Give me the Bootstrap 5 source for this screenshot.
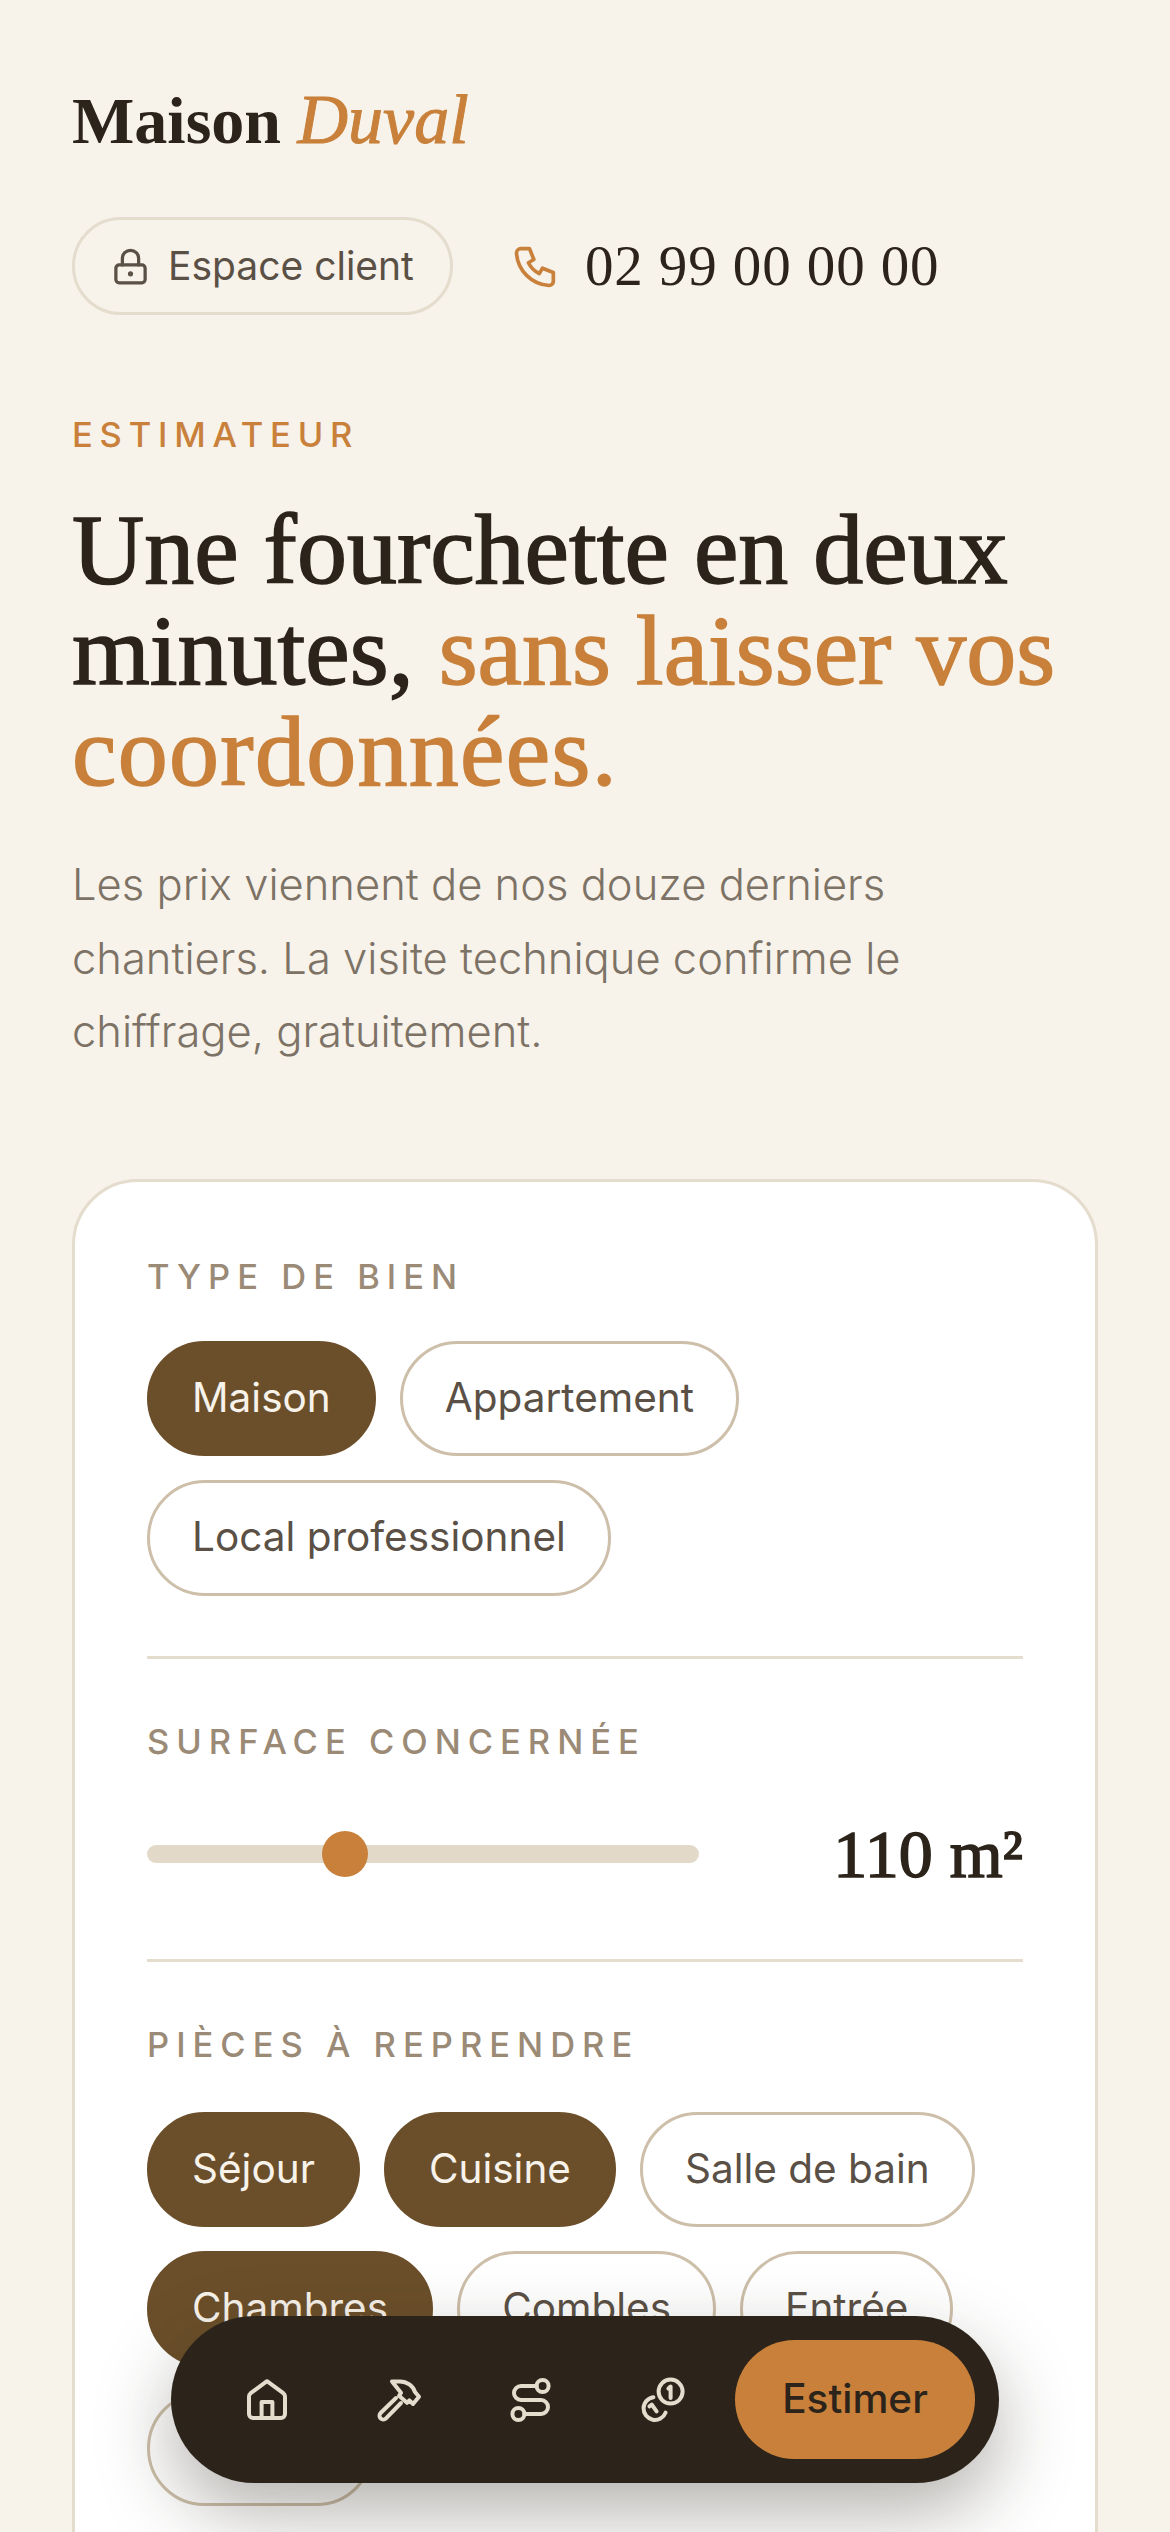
<!DOCTYPE html>
<html lang="fr">
<head>
  <meta charset="UTF-8" />
  <title>Maison Duval - Estimateur</title>
  <link href="https://cdn.jsdelivr.net/npm/bootstrap@5.3.3/dist/css/bootstrap.min.css" rel="stylesheet">
  <style>
    html, body { height: 2532px; overflow: hidden; }
    body { background: #f7f2ea; color: #2c241b; font-family: Inter, "Noto Sans", sans-serif; }
    .page-wrap { position: relative; height: 2532px; overflow: hidden; padding: 84px 72px 0; }
    .serif { font-family: "Liberation Serif", serif; }
    .logo { font-size: 66px; line-height: 72px; font-weight: 700; }
    .logo em { color: #c8803a; font-weight: 400; font-size: 70px; -webkit-text-stroke: 1px #c8803a; }
    .top-row { margin-top: 60px; gap: 57px; }
    .client-pill { height: 98px; padding: 0 36px; gap: 18px; border: 3px solid #e4dccd; color: #5a5045; font-size: 39px; }
    .phone { gap: 23px; font-size: 57px; letter-spacing: .9px; }
    .eyebrow { margin-top: 100px; color: #c8803a; font-size: 34.5px; font-weight: 500; letter-spacing: 6.8px; line-height: 40px; }
    .headline { margin: 44px 0 0; font-size: 100px; line-height: 101px; font-weight: 400; -webkit-text-stroke: 1.5px currentColor; }
    .headline span { color: #c8803a; }
    .headline .last-word { letter-spacing: 1.3px; }
    .intro { margin: 46px 0 0; color: #7d7266; font-size: 43.5px; font-weight: 300; line-height: 73.5px; }
    .form-box { margin-top: 110px; background: #fff; border: 3px solid #e4dccd; border-radius: 66px; padding: 72px 72px 0; height: 1500px; }
    .field-label { color: #9a8a76; font-size: 34.5px; font-weight: 500; letter-spacing: 7px; line-height: 45px; }
    .chips { gap: 24px; margin-top: 42px; }
    .chips-low { margin-top: 45px; }
    .chip { height: 115.5px; padding: 0 42px; font-size: 40.5px; color: #5a5045; border: 3px solid #cdbfa9; background: #fff; display: flex; align-items: center; }
    .chip-on { background: #6b4f2a; border-color: #6b4f2a; color: #f7f2ea; }
    .sep { height: 3px; background: #e4dccd; margin: 60px 0; }
    .range-row { height: 90px; margin-top: 45px; }
    .range-track { width: 552px; height: 18px; background: #e3d9c8; position: relative; }
    .range-thumb { position: absolute; left: 175px; top: -14px; width: 46px; height: 46px; background: #c8803a; }
    .range-val { font-size: 68px; line-height: 80px; font-weight: 400; -webkit-text-stroke: 1.5px currentColor; }
    .bottom-bar { position: absolute; left: 171px; top: 2316px; width: 828px; height: 167px; background: #2c241b; padding: 0 24px 0 30px; box-shadow: 0 30px 75px rgba(44,36,27,.35); }
    .bar-icon { width: 132px; display: flex; justify-content: center; }
    .bar-icon svg { width: 48px; height: 48px; fill: none; stroke: #e4dccd; stroke-width: 2; stroke-linecap: round; stroke-linejoin: round; }
    .estimer { width: 240px; height: 119px; background: #c8803a; color: #2c241b; font-size: 40.5px; font-weight: 500; }
  </style>
</head>
<body>
  <div class="page-wrap">
    <div class="logo serif">Maison <em>Duval</em></div>

    <div class="d-flex align-items-center top-row">
      <div class="client-pill d-inline-flex align-items-center rounded-pill">
        <svg width="39" height="39" viewBox="0 0 24 24" fill="none" stroke="#5a5045" stroke-width="2" stroke-linecap="round" stroke-linejoin="round"><rect x="3" y="11" width="18" height="11" rx="2"/><path d="M7 11V7a5 5 0 0 1 10 0v4"/><circle cx="12" cy="16.500" r=".6" fill="#5a5045"/></svg>
        <span>Espace client</span>
      </div>
      <div class="phone d-flex align-items-center serif">
        <svg width="52" height="52" viewBox="0 0 24 24" fill="none" stroke="#c8803a" stroke-width="1.700" stroke-linecap="round" stroke-linejoin="round"><path d="M5 4h4l2 5l-2.500 1.500a11 11 0 0 0 5 5l1.500 -2.500l5 2v4a2 2 0 0 1 -2 2a16 16 0 0 1 -15 -15a2 2 0 0 1 2 -2"/></svg>
        <span>02 99 00 00 00</span>
      </div>
    </div>

    <div class="eyebrow">ESTIMATEUR</div>
    <h1 class="headline serif">Une fourchette en deux<br>minutes, <span>sans laisser vos<br><span class="last-word">coordonnées.</span></span></h1>
    <p class="intro">Les prix viennent de nos douze derniers<br>chantiers. La visite technique confirme le<br>chiffrage, gratuitement.</p>

    <div class="form-box">
      <div class="field-label">TYPE DE BIEN</div>
      <div class="chips d-flex flex-wrap">
        <div class="chip rounded-pill chip-on">Maison</div>
        <div class="chip rounded-pill">Appartement</div>
        <div class="chip rounded-pill">Local professionnel</div>
      </div>
      <div class="sep"></div>

      <div class="field-label">SURFACE CONCERNÉE</div>
      <div class="range-row d-flex align-items-center justify-content-between">
        <div class="range-track rounded-pill"><div class="range-thumb rounded-circle"></div></div>
        <div class="range-val serif">110 m²</div>
      </div>
      <div class="sep"></div>

      <div class="field-label">PIÈCES À REPRENDRE</div>
      <div class="chips chips-low d-flex flex-wrap">
        <div class="chip rounded-pill chip-on">Séjour</div>
        <div class="chip rounded-pill chip-on">Cuisine</div>
        <div class="chip rounded-pill">Salle de bain</div>
        <div class="chip rounded-pill chip-on">Chambres</div>
        <div class="chip rounded-pill">Combles</div>
        <div class="chip rounded-pill">Entrée</div>
        <div class="chip rounded-pill">Couloir</div>
      </div>
    </div>

    <div class="bottom-bar rounded-pill d-flex align-items-center justify-content-between">
      <div class="d-flex">
        <div class="bar-icon"><svg viewBox="0 0 24 24"><path d="M3 10.200a2 2 0 0 1 .7-1.500L12 2.600l8.300 6.100a2 2 0 0 1 .7 1.500V19a2 2 0 0 1-2 2H5a2 2 0 0 1-2-2z"/><path d="M9.300 21v-8h5.400v8"/></svg></div>
        <div class="bar-icon"><svg viewBox="0 0 24 24"><path d="M10.500 11L2.800 18.500a1.800 1.800 0 0 0 2.700 2.700L13 13.500"/><path d="M8.500 2.700h4c3.500 0 6.500 2.300 7.500 5.300l2 2.400-3 3.600-1.800-1.800-1.200 1.200-4-3.500 1-1.500z"/></svg></div>
        <div class="bar-icon"><svg viewBox="0 0 24 24"><circle cx="17.800" cy="5" r="3"/><circle cx="5.700" cy="19" r="3"/><path d="M14.800 5H7a3.500 3.500 0 0 0 0 7h10a3.500 3.500 0 0 1 0 7H8.700"/></svg></div>
        <div class="bar-icon"><svg viewBox="0 0 24 24"><circle cx="15.800" cy="7.800" r="6"/><path d="M7.200 10.600A5.700 5.700 0 1 0 13.300 18.300"/><path d="M14.700 6.300l1.100-1V11"/><path d="M5.200 15.200l1.200-.9 2.400 3.400"/></svg></div>
      </div>
      <div class="estimer rounded-pill d-flex align-items-center justify-content-center">Estimer</div>
    </div>
  </div>
  <script src="https://cdn.jsdelivr.net/npm/bootstrap@5.3.3/dist/js/bootstrap.bundle.min.js"></script>
</body>
</html>
